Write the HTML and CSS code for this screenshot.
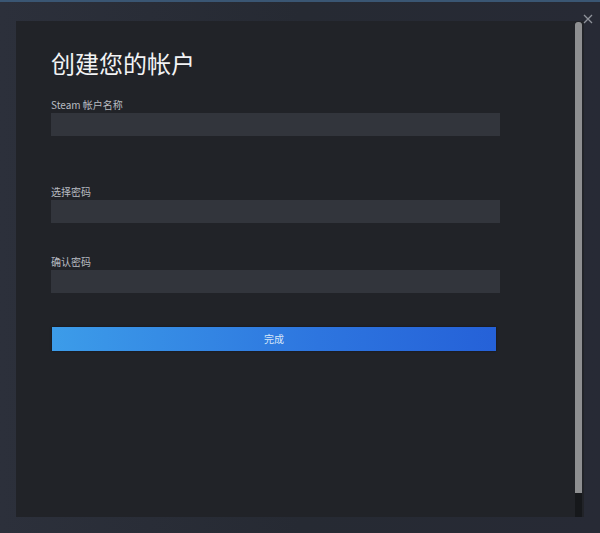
FILE: index.html
```html
<!DOCTYPE html>
<html lang="zh-CN">

<head>
    <meta charset="UTF-8">
    <meta name="viewport" content="width=device-width, initial-scale=1.0">
    <title>创建您的帐户</title>
    <link rel="stylesheet" href="styles.css">
</head>

<body>
    <div class="topLine"></div>
    <div class="closeBtn">
        <svg width="10" height="10" viewBox="0 0 10 10">
            <path d="M1 1 L9 9 M9 1 L1 9" stroke="#8f939b" stroke-width="1.3" fill="none" />
        </svg>
    </div>

    <div class="panel">
        <div class="content">
            <h1 class="title">创建您的帐户</h1>

            <div class="field first">
                <label class="label">Steam 帐户名称</label>
                <input type="text" class="input">
            </div>

            <div class="field">
                <label class="label">选择密码</label>
                <input type="password" class="input">
            </div>

            <div class="field last">
                <label class="label">确认密码</label>
                <input type="password" class="input">
            </div>

            <button class="doneBtn">完成</button>
        </div>

        <div class="scroll">
            <div class="thumb"></div>
        </div>
    </div>
</body>

</html>
```

FILE: styles.css
```css
* {
    box-sizing: border-box;
}

body {
    margin: 0;
    height: 533px;
    padding: 21px 16px 16px 16px;
    background: linear-gradient(90deg, #2c303b 0%, #262a33 50%, #272a35 100%);
    font-family: "Noto Sans CJK SC", "Noto Sans", sans-serif;
    position: relative;
    overflow: hidden;
}

.topLine {
    position: absolute;
    top: 0;
    left: 0;
    right: 0;
    height: 2px;
    background: #3a5673;
}

.closeBtn {
    position: absolute;
    top: 5px;
    right: 7px;
}

.panel {
    height: 496px;
    background-color: #212328;
    display: flex;
}

.content {
    flex: 1;
    padding: 22px 0 0 35px;
}

.title {
    margin: 0 0 15px 0;
    font-size: 24px;
    font-weight: 400;
    color: #f2f3f5;
    line-height: 40px;
}

.field {
    display: flex;
    flex-direction: column;
    margin-bottom: 32px;
}

.field.first {
    margin-bottom: 49px;
}

.field.last {
    margin-bottom: 31px;
}

.label {
    font-size: 10px;
    line-height: 14px;
    color: #b8bcc2;
    margin-bottom: 1px;
}

.input {
    width: 449px;
    height: 23px;
    border: 0;
    background-color: #32353c;
    outline: none;
}

.doneBtn {
    width: 444px;
    height: 24px;
    margin-left: 1px;
    border: 0;
    background: linear-gradient(90deg, #3c9ce9 0%, #2d75df 60%, #2561d8 100%);
    color: #d6e6f8;
    font-family: inherit;
    font-size: 10px;
    box-shadow: 0 0 2px #10141c;
}

.scroll {
    width: 7px;
    margin: 1px 2px 0 0;
    background-color: #16181b;
}

.thumb {
    height: 471px;
    background-color: #8e8f91;
    border-radius: 3px 3px 0 0;
}
```
